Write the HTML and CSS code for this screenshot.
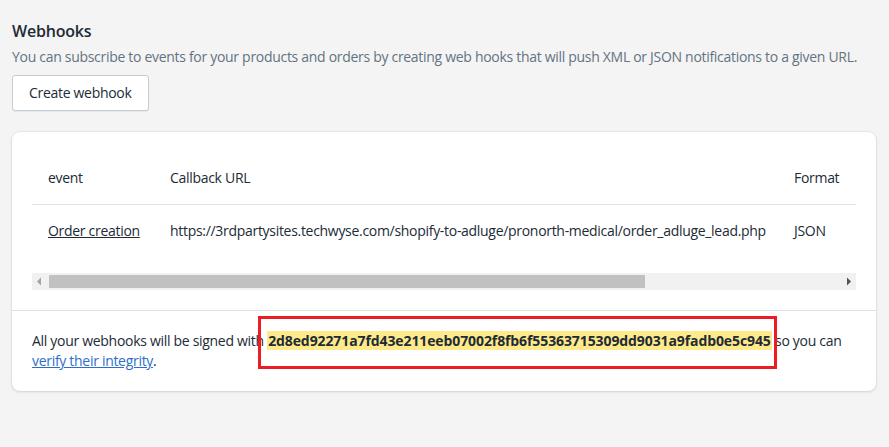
FILE: index.html
```html
<!DOCTYPE html>
<html lang="en">
<head>
<meta charset="utf-8">
<title>Webhooks</title>
<link rel="stylesheet" href="styles.css">
</head>
<body>
<div class="page">
  <h2 class="title">Webhooks</h2>
  <p class="desc">You can subscribe to events for your products and orders by creating web hooks that will push XML or JSON notifications to a given URL.</p>
  <button class="btn" type="button">Create webhook</button>

  <section class="card">
    <div class="card-section">
      <div class="table-clip">
        <table class="tbl">
          <thead>
            <tr><th class="c-event">event</th><th class="c-url">Callback URL</th><th class="c-format">Format</th><th class="c-extra"></th></tr>
          </thead>
          <tbody>
            <tr><td class="c-event"><a class="row-link" href="#">Order creation</a></td><td class="c-url">https://3rdpartysites.techwyse.com/shopify-to-adluge/pronorth-medical/order_adluge_lead.php</td><td class="c-format">JSON</td><td class="c-extra"></td></tr>
          </tbody>
        </table>
      </div>
      <div class="scrollbar">
        <span class="sb-btn"><svg width="17" height="17" viewBox="0 0 17 17"><path d="M5 8.5 L9 4.5 L9 12.5 Z" fill="#a3a3a3"/></svg></span>
        <span class="sb-track"><span class="sb-thumb"></span></span>
        <span class="sb-btn"><svg width="17" height="17" viewBox="0 0 17 17"><path d="M12 8.5 L8 4.5 L8 12.5 Z" fill="#505050"/></svg></span>
      </div>
    </div>
    <div class="card-section footer">
      <p class="sig">All your webhooks will be signed with <span class="hash-wrap"><mark class="hash">2d8ed92271a7fd43e211eeb07002f8fb6f55363715309dd9031a9fadb0e5c945</mark><span class="annot"></span></span> so you can <a class="link" href="#">verify their integrity</a>.</p>
    </div>
  </section>
</div>
</body>
</html>
```

FILE: styles.css
```css
* { box-sizing: border-box; }
html, body { margin: 0; padding: 0; }
body {
  background: #f4f4f4;
  font-family: "Open Sans", "Noto Sans", sans-serif;
  font-size: 14px;
  line-height: 20px;
  letter-spacing: -0.3px;
  color: #212b36;
}
.page {
  padding: 21px 13px 40px 12px;
  display: flex;
  flex-direction: column;
  align-items: flex-start;
}
.title {
  margin: 0;
  font-size: 16px;
  font-weight: 600;
  line-height: 20px;
  letter-spacing: -0.2px;
  color: #212b36;
}
.desc {
  margin: 6px 0 0;
  color: #637381;
  white-space: nowrap;
}
.btn {
  margin-top: 8px;
  height: 36px;
  padding: 0 16px;
  background: #fff;
  border: 1px solid #c4cdd5;
  border-radius: 3px;
  font: inherit;
  letter-spacing: -0.3px;
  color: #212b36;
  box-shadow: 0 1px 0 rgba(22,29,37,.05);
}
.card {
  margin-top: 21px;
  width: 864px;
  background: #fff;
  border-radius: 8px;
  box-shadow: 0 0 0 1px rgba(63,63,68,.05), 0 1px 3px 0 rgba(63,63,68,.15);
}
.card-section { padding: 20px; }
.card-section + .card-section { border-top: 1px solid #dfe3e8; }
.table-clip { overflow: hidden; width: 824px; }
.tbl {
  border-collapse: collapse;
  table-layout: fixed;
  width: 1093px;
}
.tbl th, .tbl td {
  padding: 16px;
  text-align: left;
  font-weight: 400;
  white-space: nowrap;
  vertical-align: top;
}
.tbl th { border-bottom: 1px solid #dfe3e8; }
.c-event { width: 122px; }
.c-url { width: 624px; }
.c-format { width: 100px; }
.row-link { color: #212b36; text-decoration: underline; }
.scrollbar {
  margin-top: 16px;
  width: 824px;
  height: 17px;
  display: flex;
  background: #f1f1f1;
}
.sb-btn { width: 17px; height: 17px; display: block; }
.sb-btn svg { display: block; }
.sb-track { flex: 1; display: block; padding: 2px 0; }
.sb-thumb {
  display: block;
  width: 596px;
  height: 13px;
  background: #c1c1c1;
}
.sig { margin: 0; }
.hash-wrap { position: relative; }
.hash {
  background: #ffea8a;
  color: #212b36;
  font-weight: 700;
  letter-spacing: -0.1px;
  padding: 0 1px;
}
.annot {
  position: absolute;
  left: -9px;
  top: -15px;
  width: 519px;
  height: 53px;
  border: 3px solid #ed1c24;
}
.link { color: #2c6ecb; text-decoration: underline; }
```
